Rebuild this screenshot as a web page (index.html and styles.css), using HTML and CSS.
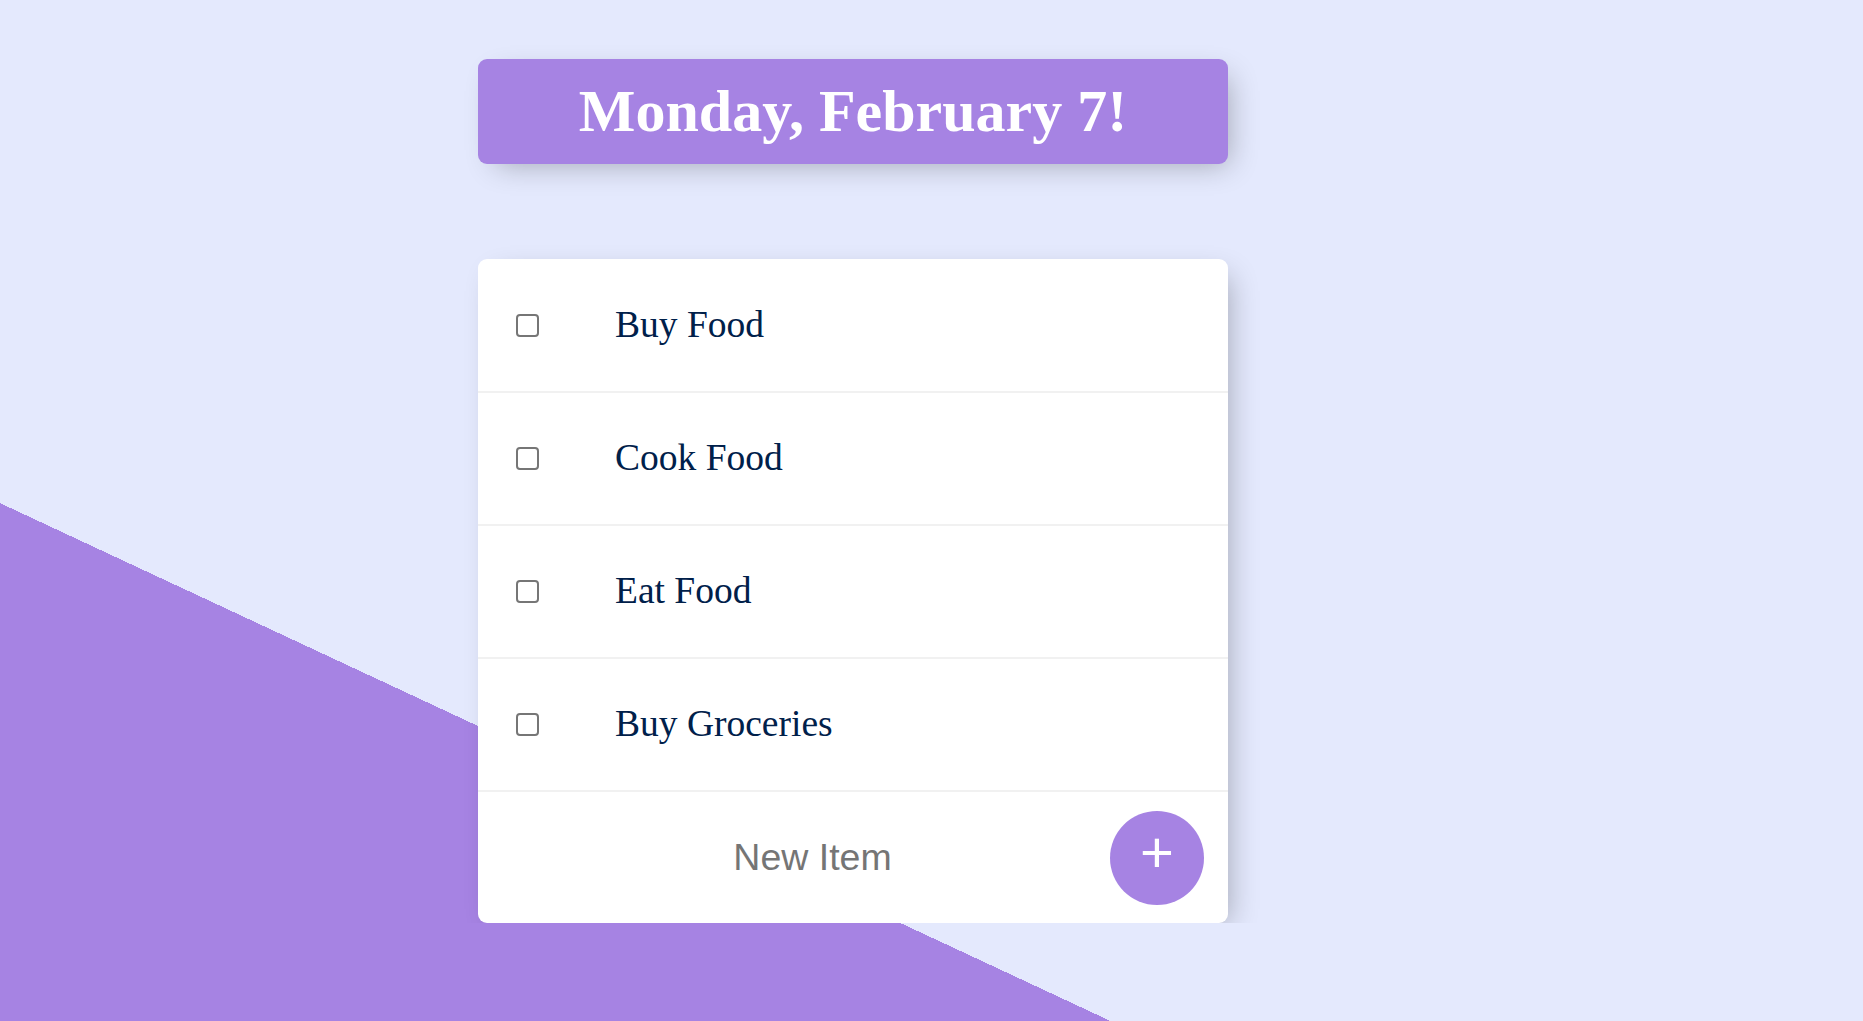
FILE: index.html
```html
<!DOCTYPE html>
<html lang="en">
<head>
<meta charset="utf-8">
<title>To-Do List</title>
<link rel="stylesheet" href="styles.css">
</head>
<body>
<main class="page">
  <div class="box heading">
    <h1 class="title">Monday, February 7!</h1>
  </div>
  <div class="box list">
    <div class="item">
      <input class="check" type="checkbox">
      <p class="label">Buy Food</p>
    </div>
    <div class="item">
      <input class="check" type="checkbox">
      <p class="label">Cook Food</p>
    </div>
    <div class="item">
      <input class="check" type="checkbox">
      <p class="label">Eat Food</p>
    </div>
    <div class="item">
      <input class="check" type="checkbox">
      <p class="label">Buy Groceries</p>
    </div>
    <form class="item new-form">
      <input class="new-input" type="text" name="newItem" placeholder="New Item" autocomplete="off">
      <button class="add-btn" type="button">+</button>
    </form>
  </div>
</main>
</body>
</html>
```
FILE: styles.css
```css
html {
  height: 100%;
  overflow: hidden;
  background-color: #E4E9FD;
  background-image: linear-gradient(25deg, #A683E3 50%, #E4E9FD 50%);
  background-size: 1863px 1875px;
  background-repeat: no-repeat;
}

body {
  margin: 0;
  font-family: "Liberation Serif", "Times New Roman", serif;
}

.page {
  width: 750px;
  margin: 59px 0 0 478px;
}

.box {
  background: #fff;
  border-radius: 9px;
  box-shadow: 9px 9px 28px -9px rgba(0, 0, 0, 0.3);
}

.heading {
  background-color: #A683E3;
  text-align: center;
}

.title {
  margin: 0;
  padding: 19px;
  font-size: 60px;
  line-height: 67px;
  font-weight: bold;
  color: #fff;
  font-family: "Liberation Serif", "Times New Roman", serif;
}

.list {
  margin-top: 95px;
  padding-top: 1px;
  display: flex;
  flex-direction: column;
}

.item {
  min-height: 131px;
  display: flex;
  align-items: center;
  border-bottom: 2px solid #F1F1F1;
}

.item:last-child {
  border-bottom: 0;
  min-height: 131px;
}

.check {
  appearance: none;
  -webkit-appearance: none;
  box-sizing: border-box;
  width: 23px;
  height: 23px;
  margin: 0 0 0 38px;
  border: 2px solid #767676;
  border-radius: 4px;
  background: #fff;
  flex: none;
}

.label {
  margin: 0;
  padding: 0 0 2px 76px;
  font-size: 37.5px;
  line-height: 43px;
  color: #00204a;
  font-family: "Liberation Serif", "Times New Roman", serif;
}

.new-form {
  margin: 0;
}

.new-input {
  margin: 0 0 0 41px;
  width: 587px;
  height: 112px;
  padding: 0;
  border: none;
  outline: none;
  background: transparent;
  text-align: center;
  font-size: 37.5px;
  font-family: "Liberation Sans", Arial, sans-serif;
  color: #222;
}

.new-input::placeholder {
  color: #757575;
}

.add-btn {
  box-sizing: border-box;
  width: 94px;
  height: 94px;
  margin: 0 0 0 4px;
  padding: 0 0 11px 0;
  border: 0;
  border-radius: 50%;
  background-color: #A683E3;
  color: #fff;
  font-size: 58px;
  line-height: 1;
  font-family: "Liberation Sans", Arial, sans-serif;
  display: flex;
  align-items: center;
  justify-content: center;
  flex: none;
}
```
